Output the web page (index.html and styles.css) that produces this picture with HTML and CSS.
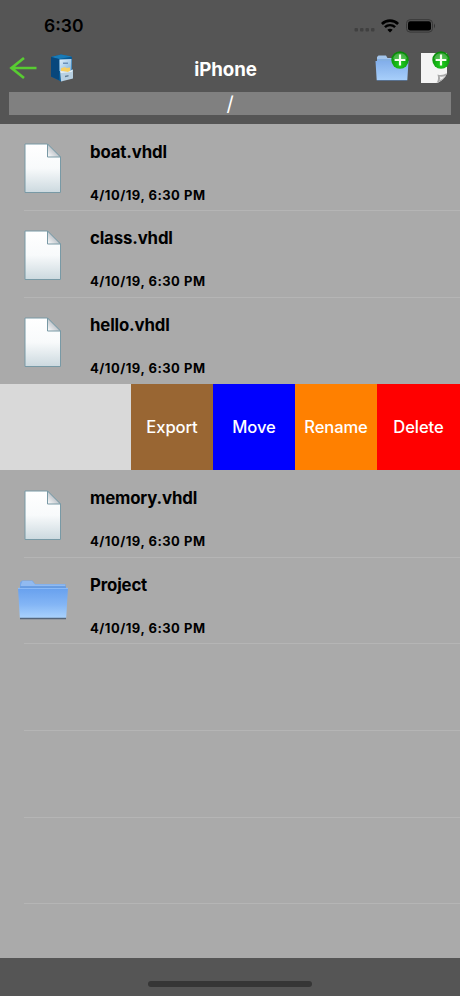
FILE: index.html
```html
<!DOCTYPE html>
<html lang="en">
<head>
    <meta charset="UTF-8">
    <meta name="viewport" content="width=device-width, initial-scale=1.0">
    <title>iPhone</title>
    <link rel="stylesheet" href="styles.css">
</head>
<body>
    <!-- Shared icons -->
    <svg class="sprite" width="0" height="0" aria-hidden="true">
        <defs>
            <linearGradient id="paper" x1="0" y1="0" x2="0" y2="1">
                <stop offset="0" stop-color="#fff"/>
                <stop offset="0.5" stop-color="#f8fafb"/>
                <stop offset="1" stop-color="#ccd9df"/>
            </linearGradient>
            <linearGradient id="fold" x1="0" y1="1" x2="0.7" y2="0.3">
                <stop offset="0" stop-color="#fff"/>
                <stop offset="1" stop-color="#a9b0b8"/>
            </linearGradient>
            <linearGradient id="folder-front" x1="0" y1="0" x2="0" y2="1">
                <stop offset="0" stop-color="#67a0ee"/>
                <stop offset="0.55" stop-color="#83b5f5"/>
                <stop offset="1" stop-color="#a9d2fc"/>
            </linearGradient>
            <linearGradient id="folder-light" x1="0" y1="0" x2="0" y2="1">
                <stop offset="0" stop-color="#82aeea"/>
                <stop offset="1" stop-color="#a8cffa"/>
            </linearGradient>
            <radialGradient id="badge" cx="0.5" cy="0.75" r="0.7">
                <stop offset="0" stop-color="#1fd01f"/>
                <stop offset="1" stop-color="#078907"/>
            </radialGradient>
            <linearGradient id="cabinet-face" x1="0" y1="0" x2="1" y2="1">
                <stop offset="0" stop-color="#e2f0fb"/>
                <stop offset="1" stop-color="#7eb2db"/>
            </linearGradient>
        </defs>
        <symbol id="icon-file" viewBox="0 0 38 51">
            <path d="M1 1H23.5L36.5 14V49.5H1Z" fill="url(#paper)" stroke="#7899a5"/>
            <path d="M23.5 1V14H36.5Z" fill="url(#fold)" stroke="#7899a5"/>
        </symbol>
        <symbol id="icon-folder" viewBox="0 0 52 42">
            <path d="M3 38H49V40.3H3Z" fill="#546579"/>
            <path d="M3 10V3.5L5 1.5H15.5L18 5H48.5V11H3Z" fill="#77a8e8"/>
            <path d="M4 5.5L5.5 2H15L18 5.5H48V7H4Z" fill="#91baf0"/>
            <path d="M3 7.5H49V10H3Z" fill="#5d93dd"/>
            <path d="M1 9H51L49.2 38.8H2.8Z" fill="url(#folder-front)"/>
            <path d="M1 9.3H51" stroke="#a0c9fb" stroke-width="0.8"/>
        </symbol>
        <symbol id="icon-plus" viewBox="0 0 18 18">
            <circle cx="9" cy="9" r="8.7" fill="url(#badge)"/>
            <path d="M2 7.5A7.3 7.3 0 0 1 16 7.5Q9 10 2 7.5Z" fill="#fff" opacity="0.25"/>
            <path d="M9 3.6V14.4M3.6 9H14.4" stroke="#f5fff0" stroke-width="2.2"/>
        </symbol>
    </svg>

    <main class="screen">
        <header class="header">
            <div class="status-bar">
                <span class="clock">6:30</span>
                <div class="status-icons">
                    <svg width="22" height="5" viewBox="0 0 22 5" fill="#404040">
                        <rect x="0.5" y="1" width="3.5" height="3.5" rx="1"/>
                        <rect x="6" y="1" width="3.5" height="3.5" rx="1"/>
                        <rect x="11.5" y="1" width="3.5" height="3.5" rx="1"/>
                        <rect x="17" y="1" width="3.5" height="3.5" rx="1"/>
                    </svg>
                    <svg class="wifi" width="18" height="14" viewBox="0 0 18 14" fill="none" stroke="#000">
                        <path d="M0.9 5A11.5 11.5 0 0 1 17.1 5" stroke-width="2.6"/>
                        <path d="M3.9 8.2A7.2 7.2 0 0 1 14.1 8.2" stroke-width="2.4"/>
                        <path d="M6.3 10.7Q9 8.7 11.7 10.7L9 13.5Z" fill="#000" stroke="none"/>
                    </svg>
                    <svg class="battery" width="30" height="14" viewBox="0 0 30 14">
                        <rect x="0.5" y="0.7" width="26" height="12.4" rx="3.6" fill="none" stroke="#383838"/>
                        <rect x="2" y="2.2" width="23" height="9.4" rx="2.3" fill="#000"/>
                        <path d="M28 4.6Q30 7 28 9.4Z" fill="#303030"/>
                    </svg>
                </div>
            </div>

            <nav class="nav-bar">
                <div class="nav-side">
                    <svg class="back" width="28" height="24" viewBox="0 0 28 24" fill="none" stroke="#58cc32" stroke-width="2.7">
                        <path d="M2 12H27.5M15 2L2.5 12L15 22"/>
                    </svg>
                    <svg class="cabinet" width="24" height="28" viewBox="0 0 24 28">
                        <path d="M1 3L11 0.5L22 3V23L11 27.5L1 22.5Z" fill="#075a96"/>
                        <path d="M1 3L11 0.5L22 2.5L9 5Z" fill="#187bb8"/>
                        <path d="M1 3L9 5V26L1 22.5Z" fill="#08477c"/>
                        <path d="M9.5 5.5L21.5 5V17H9.5Z" fill="url(#cabinet-face)"/>
                        <path d="M13 8.5H18V10H13Z" fill="#6d91b8"/>
                        <path d="M11 18V14.3L15 13L16 14L20 13.5V18Z" fill="#f7cf62"/>
                        <path d="M10 17L18 18L23 15.5V24.5L11 27.5Z" fill="#b8d0e1"/>
                        <path d="M10 17L18 18L23 15.5L21.5 18L11 19Z" fill="#e7f2f8"/>
                        <path d="M15 21.8L18.5 21V22.5L15 23.2Z" fill="#637f96"/>
                    </svg>
                </div>
                <h1 class="title">iPhone</h1>
                <div class="nav-side nav-actions">
                    <div class="add-icon add-folder">
                        <svg width="34" height="28" viewBox="0 0 34 28">
                            <path d="M2 24.5H32V26H2Z" fill="#3f526b"/>
                            <path d="M2 8V2L3.5 0.5H11L12.5 3H32V8Z" fill="#a3c5ec"/>
                            <path d="M2 4H32V6H2Z" fill="#83afe3"/>
                            <path d="M0.5 6H33.5L32.3 25.3H1.7Z" fill="url(#folder-light)"/>
                        </svg>
                        <svg class="plus" width="18" height="18"><use href="#icon-plus"/></svg>
                    </div>
                    <div class="add-icon add-file">
                        <svg width="27" height="30" viewBox="0 0 27 30">
                            <path d="M0 0H26V20.5Q23 27 16.5 30H0Z" fill="#f4f4f4"/>
                            <path d="M15.5 30Q18 26.5 16.5 21.5Q21.5 23 26 20Q24 27 15.5 30Z" fill="#a9a9a9"/>
                            <path d="M18 27.5Q20 25.5 18.7 23.5Q22 24 24.5 22.7Q22 26 18 27.5Z" fill="#eee"/>
                        </svg>
                        <svg class="plus" width="18" height="18"><use href="#icon-plus"/></svg>
                    </div>
                </div>
            </nav>
            <div class="path-bar">/</div>
        </header>

        <ul class="file-list">
            <li class="row">
                <div class="thumb"><svg class="file"><use href="#icon-file"/></svg></div>
                <div class="info">
                    <span class="name">boat.vhdl</span>
                    <span class="date">4/10/19, 6:30 PM</span>
                </div>
            </li>
            <li class="row">
                <div class="thumb"><svg class="file"><use href="#icon-file"/></svg></div>
                <div class="info">
                    <span class="name">class.vhdl</span>
                    <span class="date">4/10/19, 6:30 PM</span>
                </div>
            </li>
            <li class="row row-last">
                <div class="thumb"><svg class="file"><use href="#icon-file"/></svg></div>
                <div class="info">
                    <span class="name">hello.vhdl</span>
                    <span class="date">4/10/19, 6:30 PM</span>
                </div>
            </li>
            <!-- Swiped row with its actions -->
            <li class="row row-swiped">
                <button class="action export">Export</button>
                <button class="action move">Move</button>
                <button class="action rename">Rename</button>
                <button class="action delete">Delete</button>
            </li>
            <li class="row">
                <div class="thumb"><svg class="file"><use href="#icon-file"/></svg></div>
                <div class="info">
                    <span class="name">memory.vhdl</span>
                    <span class="date">4/10/19, 6:30 PM</span>
                </div>
            </li>
            <li class="row">
                <div class="thumb"><svg class="folder"><use href="#icon-folder"/></svg></div>
                <div class="info">
                    <span class="name">Project</span>
                    <span class="date">4/10/19, 6:30 PM</span>
                </div>
            </li>
            <li class="row"></li>
            <li class="row"></li>
            <li class="row"></li>
        </ul>

        <footer class="footer">
            <div class="home-indicator"></div>
        </footer>
    </main>
</body>
</html>
```

FILE: styles.css
```css
:root {
    --bar-color: #555;
    --list-color: #aaa;
    --line-color: #b5b5b5;
    --row-height: 86.67px;
}

* {
    margin: 0;
    padding: 0;
    box-sizing: border-box;
}

body {
    font-family: Inter, 'Liberation Sans', sans-serif;
    background: var(--bar-color);
    color: #000;
}

svg {
    display: block;
    flex: none;
}

.sprite {
    position: absolute;
}

.screen {
    display: flex;
    flex-direction: column;
    width: 460px;
    height: 996px;
    overflow: hidden;
}

/* Header */
.header {
    height: 124px;
    background: var(--bar-color);
}

.status-bar {
    display: flex;
    justify-content: space-between;
    height: 48px;
    padding: 15px 24px 0 44px;
}

.clock {
    font-size: 17.5px;
    font-weight: 600;
    line-height: 21px;
}

.status-icons {
    display: flex;
    height: 21px;
    align-items: center;
}

.status-icons svg:first-child {
    margin-top: 8px;
}

.wifi {
    margin-left: 5px;
}

.battery {
    margin-left: 7px;
}

.nav-bar {
    display: grid;
    grid-template-columns: 1fr auto 1fr;
    height: 44px;
    padding: 0 10px 0 1px;
}

.nav-side {
    display: flex;
    align-items: flex-start;
}

.back {
    margin: 8px 0 0 8px;
}

.cabinet {
    margin: 6px 0 0 13px;
}

.title {
    padding-top: 10px;
    font-size: 18.7px;
    font-weight: 650;
    line-height: 24px;
    letter-spacing: -0.1px;
    color: #fff;
}

.nav-actions {
    justify-content: flex-end;
}

.add-icon {
    position: relative;
    padding-top: 5px;
}

.add-folder {
    margin-right: 12px;
    padding-top: 7px;
}

.add-file {
    width: 29px;
}

.plus {
    position: absolute;
    top: 3px;
    right: 0;
}

.path-bar {
    height: 23px;
    margin: 0 9px;
    background: #808080;
    color: #fff;
    font-size: 20px;
    line-height: 25px;
    text-align: center;
}

/* File list */
.file-list {
    height: 834px;
    padding-top: 0.4px;
    list-style: none;
    background: var(--list-color);
}

.row {
    display: flex;
    height: var(--row-height);
    background: linear-gradient(var(--line-color), var(--line-color)) 24px 100% / 100% 1px no-repeat;
}

.row-last {
    background: none;
}

.thumb {
    display: flex;
    justify-content: center;
    width: 90px;
    padding-right: 4px;
}

.file {
    width: 38px;
    height: 51px;
    margin-top: 19px;
}

.folder {
    width: 52px;
    height: 42px;
    margin-top: 21px;
}

.info {
    display: flex;
    flex-direction: column;
    padding-top: 16.3px;
}

.name {
    font-size: 16.8px;
    font-weight: 650;
    line-height: 22px;
    letter-spacing: -0.15px;
}

.date {
    margin-top: 23px;
    font-size: 13px;
    font-weight: 650;
    line-height: 18px;
    letter-spacing: 0.5px;
}

.row-swiped {
    justify-content: flex-end;
    height: 86px;
    margin-bottom: 0.67px;
    background: #d9d9d9;
}

.action {
    width: 82px;
    border: none;
    font-family: inherit;
    font-size: 16.6px;
    font-weight: 500;
    letter-spacing: -0.1px;
    color: #fff;
    cursor: pointer;
}

.export {
    background: #996633;
}

.move {
    background: #0000ff;
}

.rename {
    background: #ff8000;
}

.delete {
    width: 83px;
    background: #ff0000;
}

/* Bottom bar */
.footer {
    display: flex;
    justify-content: center;
    height: 38px;
    padding-top: 23px;
}

.home-indicator {
    width: 164px;
    height: 6px;
    border-radius: 3px;
    background: #363636;
}
```
